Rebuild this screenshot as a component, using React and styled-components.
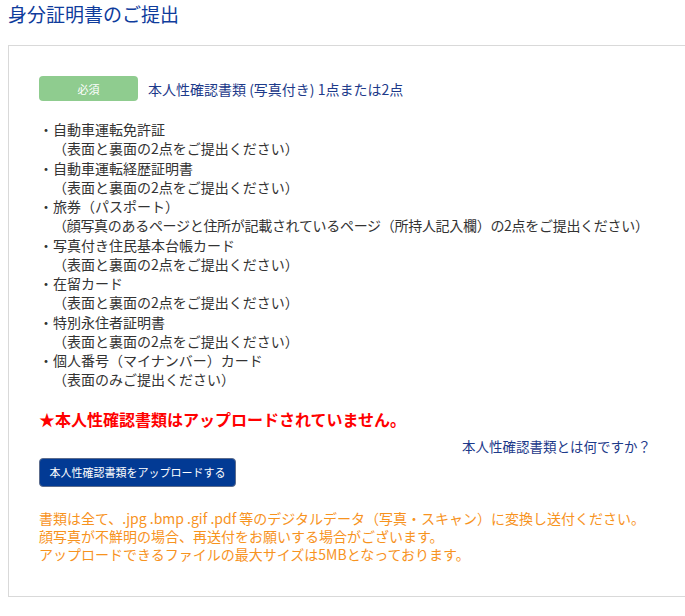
import React from 'react'
import styled, { createGlobalStyle } from 'styled-components'

const GlobalStyle = createGlobalStyle`
	html, body {
		margin: 0;
		padding: 0;
		background: #fff;
		overflow: hidden;
	}
	body {
		font-family: "Noto Sans CJK JP", "Noto Sans", sans-serif;
		color: #333;
	}
`

const Page = styled.div`
	padding: 0 8px;
	width: 740px;
`

const Title = styled.h1`
	margin: 0;
	padding-top: 2px;
	font-size: 19px;
	line-height: 24px;
	font-weight: normal;
	color: #0f3c9c;
`

const Card = styled.div`
	margin-top: 19px;
	width: 720px;
	box-sizing: border-box;
	border: 1px solid #d9d9d9;
	padding: 30px 30px 33px 30px;
`

const RequiredRow = styled.div`
	display: flex;
	align-items: center;
	gap: 10px;
`

const Badge = styled.span`
	display: inline-flex;
	align-items: center;
	justify-content: center;
	width: 99px;
	height: 25px;
	border-radius: 4px;
	background: #8fcc8f;
	color: #fff;
	font-size: 11px;
`

const Label = styled.span`
	font-size: 14px;
	color: #1d3a8a;
`

const DocList = styled.ul`
	list-style: none;
	margin: 19px 0 0;
	padding: 0;
	font-size: 14px;
	line-height: 19.25px;
	color: #333;
`

const DocItem = styled.li`
	margin: 0;
`

const Note = styled.div`
	padding-left: 14px;
	letter-spacing: ${({long}) => long ? '-0.3px' : '0'};
`

const Warning = styled.p`
	margin: 17px 0 0;
	font-size: 16px;
	line-height: 24px;
	font-weight: bold;
	color: #ff0000;
`

const LinkRow = styled.div`
	margin-top: 5px;
	padding-right: 46px;
	text-align: right;
	font-size: 13.5px;
	line-height: 20px;
`

const HelpLink = styled.a`
	color: #1d3a8a;
	text-decoration: none;
`

const UploadButton = styled.button`
	margin-top: 2px;
	width: 197px;
	height: 29px;
	border-radius: 4px;
	border: 1px solid #5c6c8c;
	background: #023a94;
	color: #fff;
	font-family: inherit;
	font-size: 11px;
	padding: 0;
	cursor: pointer;
`

const Notice = styled.div`
	margin-top: 22px;
	font-size: 14px;
	line-height: 18px;
	color: #f7931e;
`

const docs = [
	['自動車運転免許証', '（表面と裏面の2点をご提出ください）'],
	['自動車運転経歴証明書', '（表面と裏面の2点をご提出ください）'],
	['旅券（パスポート）', '（顔写真のあるページと住所が記載されているページ（所持人記入欄）の2点をご提出ください）'],
	['写真付き住民基本台帳カード', '（表面と裏面の2点をご提出ください）'],
	['在留カード', '（表面と裏面の2点をご提出ください）'],
	['特別永住者証明書', '（表面と裏面の2点をご提出ください）'],
	['個人番号（マイナンバー）カード', '（表面のみご提出ください）']
]

const App = () => (
	<Page>
		<GlobalStyle />
		<Title>身分証明書のご提出</Title>
		<Card>
			<RequiredRow>
				<Badge>必須</Badge>
				<Label>本人性確認書類 (写真付き) 1点または2点</Label>
			</RequiredRow>
			<DocList>
				{docs.map(([name, note]) =>
					<DocItem key={name}>
						<div>・{name}</div>
						<Note long={note.length > 30}>{note}</Note>
					</DocItem>
				)}
			</DocList>
			<Warning>★本人性確認書類はアップロードされていません。</Warning>
			<LinkRow>
				<HelpLink href="#">本人性確認書類とは何ですか？</HelpLink>
			</LinkRow>
			<UploadButton>本人性確認書類をアップロードする</UploadButton>
			<Notice>
				<div>書類は全て、.jpg .bmp .gif .pdf 等のデジタルデータ（写真・スキャン）に変換し送付ください。</div>
				<div>顔写真が不鮮明の場合、再送付をお願いする場合がございます。</div>
				<div>アップロードできるファイルの最大サイズは5MBとなっております。</div>
			</Notice>
		</Card>
	</Page>
)

export default App
